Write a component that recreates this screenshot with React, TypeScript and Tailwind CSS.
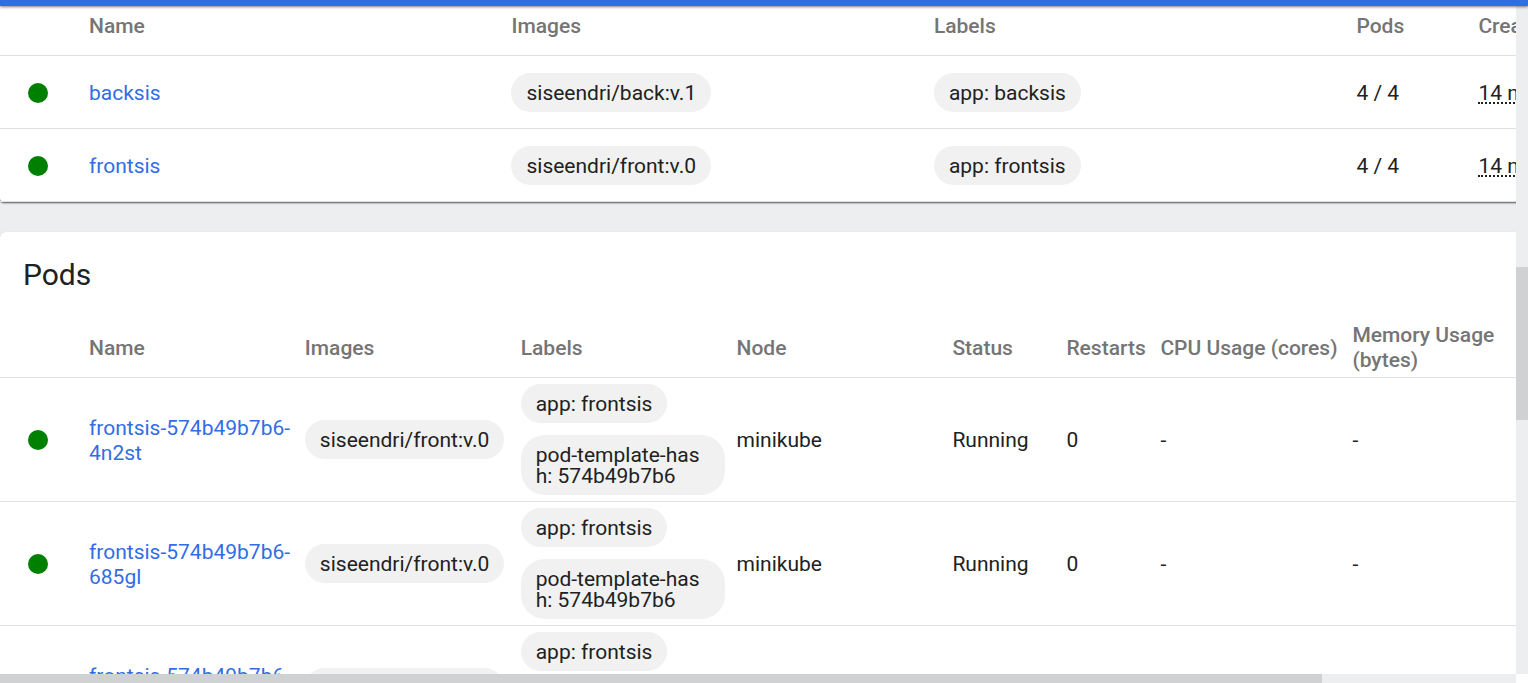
import type { ReactNode } from "react";

const deployments = [
  { name: "backsis", image: "siseendri/back:v.1", label: "app: backsis", pods: "4 / 4", created: "14 minutes ago" },
  { name: "frontsis", image: "siseendri/front:v.0", label: "app: frontsis", pods: "4 / 4", created: "14 minutes ago" },
];

const labels = ["app: frontsis", "pod-template-hash: 574b49b7b6"];

const pods = [
  { name: "frontsis-574b49b7b6-4n2st", image: "siseendri/front:v.0", node: "minikube", status: "Running" },
  { name: "frontsis-574b49b7b6-685gl", image: "siseendri/front:v.0", node: "minikube", status: "Running" },
  { name: "frontsis-574b49b7b6-9xkzp", image: "siseendri/front:v.0", node: "minikube", status: "Running" },
];

function Chip({ children }: { children: ReactNode }) {
  return (
    <span className="block w-fit break-all rounded-3xl bg-[#f1f1f1] px-[15px] pt-[10px] pb-2 leading-[21px]">
      {children}
    </span>
  );
}

function StatusDot() {
  return <span role="img" aria-label="Healthy" className="ml-7 block size-5 rounded-full bg-[#008000]" />;
}

function Head({ children }: { children?: ReactNode }) {
  return <th className="border-b border-[#e0e0e0] p-0 pt-px pr-3 text-left font-medium text-[#757575]">{children}</th>;
}

function Cell({ children }: { children?: ReactNode }) {
  return <td className="border-b border-[#e0e0e0] p-0 pr-3">{children}</td>;
}

function TextCell({ children }: { children?: ReactNode }) {
  return <td className="border-b border-[#e0e0e0] p-0 pt-0.5 pr-3">{children}</td>;
}

function DotCell() {
  return (
    <td className="border-b border-[#e0e0e0] p-0 pt-px">
      <StatusDot />
    </td>
  );
}

function ResourceLink({ children }: { children: ReactNode }) {
  return (
    <a href="#" className="text-[#326de6]">
      {children}
    </a>
  );
}

function Deployments() {
  return (
    <section className="rounded-b-sm bg-white shadow-[0_1px_2px_rgba(0,0,0,0.65)]">
      <table className="w-full table-fixed border-separate border-spacing-0">
        <colgroup>
          <col className="w-[89px]" />
          <col />
          <col />
          <col />
          <col className="w-[122px]" />
          <col className="w-[265px]" />
        </colgroup>
        <thead>
          <tr className="h-[50px] *:pb-[10px]">
            <Head />
            <Head>Name</Head>
            <Head>Images</Head>
            <Head>Labels</Head>
            <Head>Pods</Head>
            <Head>Created</Head>
          </tr>
        </thead>
        <tbody>
          {deployments.map((d) => (
            <tr key={d.name} className="h-[73px]">
              <DotCell />
              <TextCell><ResourceLink>{d.name}</ResourceLink></TextCell>
              <Cell><Chip>{d.image}</Chip></Cell>
              <Cell><Chip>{d.label}</Chip></Cell>
              <TextCell>{d.pods}</TextCell>
              <TextCell>
                <span className="inline-block border-b-2 border-dotted border-[#212121] leading-[18px]">{d.created}</span>
              </TextCell>
            </tr>
          ))}
        </tbody>
      </table>
    </section>
  );
}

function Pods() {
  return (
    <section className="rounded-md bg-white shadow-[0_1px_2px_rgba(0,0,0,0.3)]">
      <h2 className="flex h-[86px] items-center px-[23px] text-[30px] leading-9">Pods</h2>
      <table className="w-full table-fixed border-separate border-spacing-0">
        <colgroup>
          <col className="w-[89px]" />
          <col />
          <col />
          <col />
          <col />
          <col className="w-[114px]" />
          <col className="w-[94px]" />
          <col className="w-[192px]" />
          <col className="w-[391px]" />
        </colgroup>
        <thead>
          <tr className="h-[60px]">
            <Head />
            <Head>Name</Head>
            <Head>Images</Head>
            <Head>Labels</Head>
            <Head>Node</Head>
            <Head>Status</Head>
            <Head>Restarts</Head>
            <Head><span className="whitespace-nowrap">CPU Usage (cores)</span></Head>
            <Head><span className="block max-w-44">Memory Usage (bytes)</span></Head>
          </tr>
        </thead>
        <tbody>
          {pods.map((p) => (
            <tr key={p.name} className="h-[124px]">
              <DotCell />
              <TextCell><ResourceLink>{p.name}</ResourceLink></TextCell>
              <Cell><Chip>{p.image}</Chip></Cell>
              <Cell>
                <div className="flex flex-col gap-3">
                  {labels.map((l) => <Chip key={l}>{l}</Chip>)}
                </div>
              </Cell>
              <TextCell>{p.node}</TextCell>
              <TextCell>{p.status}</TextCell>
              <TextCell>0</TextCell>
              <TextCell>-</TextCell>
              <TextCell>-</TextCell>
            </tr>
          ))}
        </tbody>
      </table>
    </section>
  );
}

export default function App() {
  return (
    <div className="flex h-screen flex-col overflow-hidden bg-white font-['Roboto',sans-serif] text-[21px] leading-[25px] text-[#212121]">
      <header className="z-10 h-[6px] shrink-0 bg-[#326de6] shadow-[0_1px_3px_rgba(0,0,0,0.5)]" />
      <div className="flex min-h-0 flex-1">
        <main className="min-w-0 flex-1 overflow-hidden bg-[#eceef0]">
          <div className="flex w-[115%] flex-col gap-[30px]">
            <Deployments />
            <Pods />
          </div>
        </main>
        <div className="flex w-3 shrink-0 flex-col bg-[#eceef0]">
          <div className="flex-[261]" />
          <div className="flex-[153] bg-[#d0d1d3]" />
          <div className="flex-[254]" />
        </div>
      </div>
      <div className="flex h-[9px] shrink-0 pr-3">
        <div className="flex-[1322] bg-[#d0d1d3]" />
        <div className="flex-[194] bg-[#eceef0]" />
      </div>
    </div>
  );
}
